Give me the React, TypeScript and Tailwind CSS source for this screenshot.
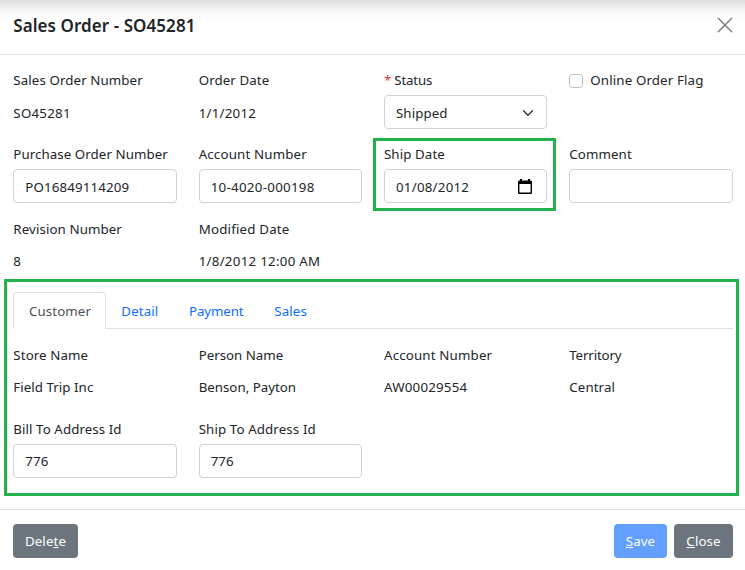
import type { ReactNode } from "react";

const inputBox =
  "h-[34px] w-full flex items-center rounded-[4px] border border-[#ced4da] bg-white pl-[11px] pr-[13px] leading-[21px]";

function Field({
  label,
  labelClass = "",
  children,
}: {
  label: ReactNode;
  labelClass?: string;
  children?: ReactNode;
}) {
  return (
    <div className="h-[59px]">
      <div className={"h-[21px] mb-1 leading-[21px] " + labelClass}>{label}</div>
      {children}
    </div>
  );
}

function Value({ className = "pt-[7px]", children }: { className?: string; children: ReactNode }) {
  return <div className={"leading-[21px] " + className}>{children}</div>;
}

function Close() {
  return (
    <svg width="16" height="16" viewBox="0 0 16 16" className="text-[#7f7f7f]" aria-hidden="true">
      <path d="M1.300 1.300 14.700 14.700M14.700 1.300 1.300 14.700" stroke="currentColor" strokeWidth="1.5" strokeLinecap="round" />
    </svg>
  );
}

function Chevron() {
  return (
    <svg width="12" height="12" viewBox="0 0 16 16" fill="none" className="-mr-px mt-px" aria-hidden="true">
      <path d="m2 5 6 6 6-6" stroke="#343a40" strokeWidth="2" strokeLinecap="round" strokeLinejoin="round" />
    </svg>
  );
}

function Calendar() {
  return (
    <svg width="14" height="15" viewBox="0 0 14 15" className="mr-[1.4px]" aria-hidden="true">
      <path
        fill="#000"
        fillRule="evenodd"
        d="M2 0h2v1.500h6V0h2v1.500h.7c.7 0 1.300.6 1.300 1.300v10.900c0 .7-.6 1.300-1.300 1.300H1.300C.6 15 0 14.400 0 13.700V2.800c0-.7.6-1.300 1.300-1.300H2zM1.400 5v8.600h11.200V5z"
      />
    </svg>
  );
}

export default function App() {
  return (
    <div className="h-[570px] w-[745px] overflow-hidden bg-white font-['Noto_Sans',sans-serif] text-[13.3px] tracking-[0.1px] text-[#212529] whitespace-nowrap">
      <header className="flex h-[55px] items-center justify-between border-b border-[#dee2e6] bg-[linear-gradient(to_bottom,#e0e0e0_0px,#e6e6e6_4px,#f5f5f5_10px,#fdfdfd_17px,#ffffff_21px)] pl-[13.33px] pr-3">
        <h1 className="text-[17px] font-semibold leading-6 tracking-[0.06px] -mt-[3px]">Sales Order - SO45281</h1>
        <div className="-mt-1">
          <Close />
        </div>
      </header>

      <main className="h-[454px] pt-[15px]">
        <div className="ml-[13.33px] grid w-[719.4px] grid-cols-4 gap-x-[21.92px] gap-y-[15px]">
          <Field label="Sales Order Number">
            <Value className="pt-2 tracking-[0.25px]">SO45281</Value>
          </Field>
          <Field label="Order Date">
            <Value className="pt-2 tracking-[0.25px]">1/1/2012</Value>
          </Field>
          <Field
            label={
              <>
                <span className="text-[#dc3545]">*</span> Status
              </>
            }
            labelClass="tracking-[-0.2px]"
          >
            <div className={inputBox + " justify-between"}>
              <span className="pt-0.5">Shipped</span>
              <Chevron />
            </div>
          </Field>
          <div className="flex h-[21px] items-center">
            <span className="h-3.5 w-3.5 rounded-[3.5px] border border-[#bfbfbf]" />
            <span className="ml-[7px] leading-[21px] tracking-[0.14px]">Online Order Flag</span>
          </div>

          <Field label="Purchase Order Number" labelClass="tracking-[0.07px]">
            <div className={inputBox}>
              <span className="pt-0.5 tracking-[0.15px]">PO16849114209</span>
            </div>
          </Field>
          <Field label="Account Number" labelClass="tracking-[0.17px]">
            <div className={inputBox}>
              <span className="pt-0.5 tracking-[0.3px]">10-4020-000198</span>
            </div>
          </Field>
          <div className="relative">
            <Field label="Ship Date">
              <div className={inputBox + " justify-between"}>
                <span className="pt-0.5 tracking-[0.25px]">01/08/2012</span>
                <Calendar />
              </div>
            </Field>
            <div className="absolute -left-[11px] -top-1.5 h-[73px] w-[183px] border-3 border-[#22b14c]" />
          </div>
          <Field label="Comment">
            <div className={inputBox} />
          </Field>

          <Field label="Revision Number" labelClass="pt-px">
            <Value className="pt-2">8</Value>
          </Field>
          <Field label="Modified Date" labelClass="pt-px tracking-[0.2px]">
            <Value className="pt-2 tracking-[0.28px]">1/8/2012 12:00 AM</Value>
          </Field>
        </div>

        <section className="ml-1 mt-[2px] h-[217px] w-[735px] border-3 border-[#22b14c] pl-[6.33px] pt-[10px]">
          <nav className="flex h-[37px] w-[719.4px] border-b border-[#dee2e6] leading-[37px] text-[#0d6efd]">
            <span className="h-[37px] w-[93px] rounded-t-[4px] border border-b-0 border-[#dee2e6] bg-white pl-[14.67px] text-[#495057]">
              Customer
            </span>
            <span className="w-[67.67px] pl-[15px] pt-px">Detail</span>
            <span className="w-[85.33px] pl-[15px] pt-px tracking-[-0.1px]">Payment</span>
            <span className="pl-[15px] pt-px">Sales</span>
          </nav>
          <div className="mt-4 grid w-[719.4px] grid-cols-4 gap-x-[21.92px] gap-y-[15px]">
            <Field label="Store Name">
              <Value className="pt-[7px] tracking-[0.05px]">Field Trip Inc</Value>
            </Field>
            <Field label="Person Name" labelClass="tracking-[0px]">
              <Value className="pt-[7px] tracking-[0px]">Benson, Payton</Value>
            </Field>
            <Field label="Account Number" labelClass="tracking-[0.17px]">
              <Value className="pt-[7px] tracking-[0.22px]">AW00029554</Value>
            </Field>
            <Field label="Territory" labelClass="tracking-[-0.15px]">
              <Value>Central</Value>
            </Field>
            <Field label="Bill To Address Id" labelClass="tracking-[0.08px]">
              <div className={inputBox}>776</div>
            </Field>
            <Field label="Ship To Address Id" labelClass="tracking-[0.12px]">
              <div className={inputBox}>776</div>
            </Field>
          </div>
        </section>
      </main>

      <footer className="flex h-[61px] items-start border-t border-[#dee2e6] pl-[13px] pr-3 pt-[14px] text-white">
        <button className="h-[34px] w-[65px] rounded-[4px] bg-[#6c757d] pt-0.5">
          Dele<u>t</u>e
        </button>
        <button className="ml-auto h-[34px] w-[53px] rounded-[4px] bg-[#629fff] pt-0.5">
          <u>S</u>ave
        </button>
        <button className="ml-[7px] h-[34px] w-[59px] rounded-[4px] bg-[#6c757d] pt-0.5">
          <u>C</u>lose
        </button>
      </footer>
    </div>
  );
}
